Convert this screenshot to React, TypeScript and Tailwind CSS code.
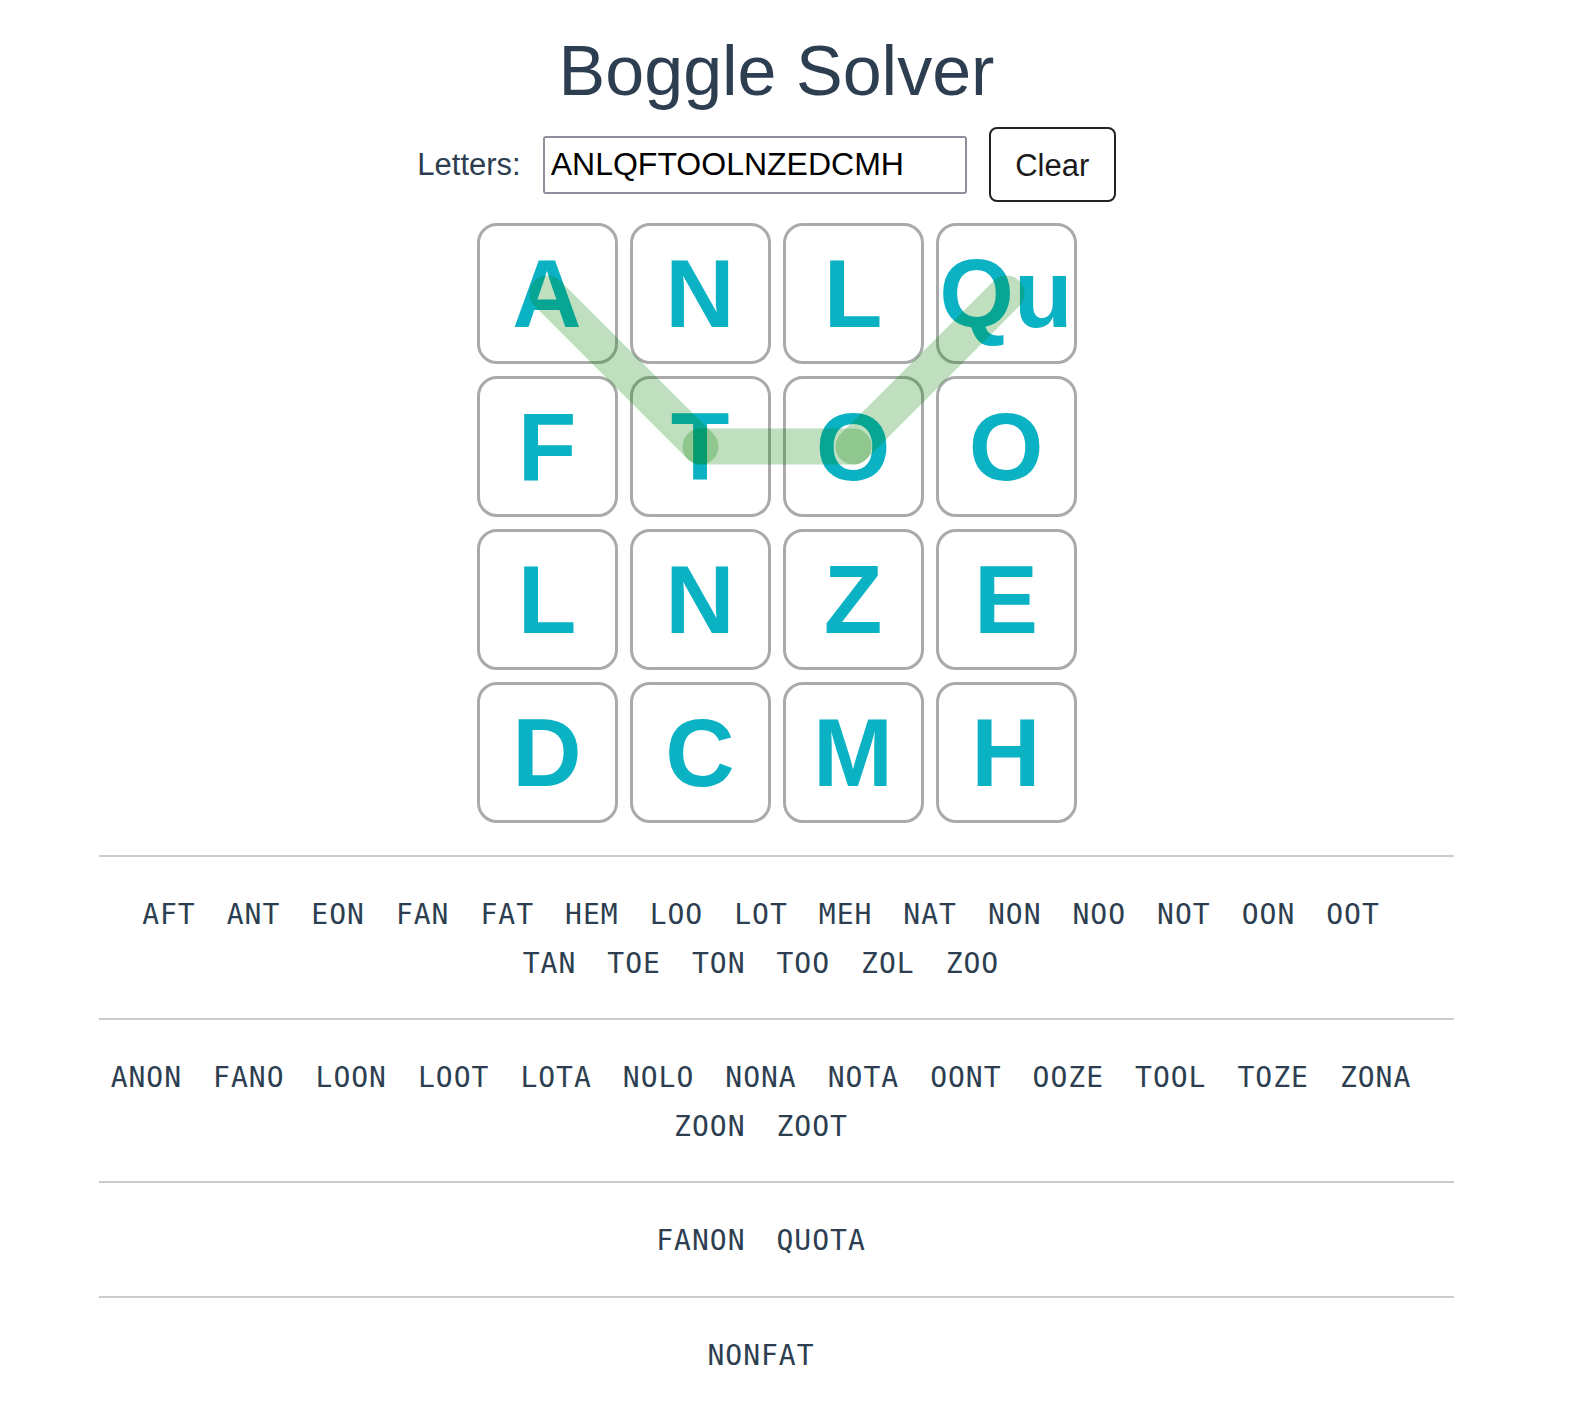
import React from "react";

const board: string[] = ["A","N","L","Qu","F","T","O","O","L","N","Z","E","D","C","M","H"];

const sections: string[][][] = [
  [
    ["AFT","ANT","EON","FAN","FAT","HEM","LOO","LOT","MEH","NAT","NON","NOO","NOT","OON","OOT"],
    ["TAN","TOE","TON","TOO","ZOL","ZOO"],
  ],
  [
    ["ANON","FANO","LOON","LOOT","LOTA","NOLO","NONA","NOTA","OONT","OOZE","TOOL","TOZE","ZONA"],
    ["ZOON","ZOOT"],
  ],
  [["FANON","QUOTA"]],
  [["NONFAT"]],
];

const PITCH = 153;
const HALF = 70.5;
const pathCells: [number, number][] = [
  [0, 3],
  [1, 2],
  [1, 1],
  [0, 0],
];

function center(rc: [number, number]) {
  return { x: rc[1] * PITCH + HALF, y: rc[0] * PITCH + HALF };
}

export default function App() {
  const segs = pathCells.slice(0, -1).map((c, i) => {
    const a = center(c);
    const b = center(pathCells[i + 1]);
    return { a, b };
  });

  return (
    <div
      className="min-h-[1410px] bg-white text-[#2c3e50]"
      style={{ fontFamily: '"Liberation Sans", Arial, Helvetica, sans-serif' }}
    >
      <div className="ml-[99px] w-[1355px] text-center">
        <h1 className="pt-[31px] text-[70px] leading-[80px] font-normal">Boggle Solver</h1>

        <div className="mt-[16px] flex h-[75px] items-center justify-center pr-[20px]">
          <label className="text-[31px] leading-[36px] text-[#2c3e50]">Letters:</label>
          <input
            className="ml-[22px] h-[58px] w-[424px] rounded-[3px] border-2 border-[#8f8f9d] bg-white pl-[6px] text-[32px] text-black outline-none"
            defaultValue="ANLQFTOOLNZEDCMH"
          />
          <button className="ml-[22px] h-[75px] w-[127px] rounded-[8px] border-2 border-[#222222] bg-white pt-[3px] text-[31px] text-[#1a1a1a]">
            Clear
          </button>
        </div>

        <div className="relative mx-auto mt-[21px] grid w-[600px] grid-cols-4 gap-[12px]">
          {board.map((l, i) => (
            <div
              key={i}
              className="flex h-[141px] w-[141px] items-center justify-center rounded-[20px] border-[3px] border-[#aaaaaa] text-[96px] font-bold leading-none text-[#0ab2c4]"
            >
              {l}
            </div>
          ))}
          <svg
            className="pointer-events-none absolute left-0 top-0"
            width={600}
            height={600}
            viewBox="0 0 600 600"
          >
            {segs.map((s, i) => (
              <line
                key={i}
                x1={s.a.x}
                y1={s.a.y}
                x2={s.b.x}
                y2={s.b.y}
                stroke="#008000"
                strokeOpacity={0.25}
                strokeWidth={36}
                strokeLinecap="round"
              />
            ))}
          </svg>
        </div>

        <div className="mt-[32px]">
          {sections.map((sec, si) => (
            <div key={si}>
              <div className="h-[2px] w-full bg-[#c9ccd0]" />
              <div
                className="pb-[30px] pt-[34px] text-[28px] leading-[48.5px] tracking-[1px] text-[#2c3e50]"
                style={{ fontFamily: '"DejaVu Sans Mono", monospace' }}
              >
                {sec.map((line, li) => (
                  <div key={li} className="flex justify-center">
                    {line.map((w) => (
                      <span key={w} className="mr-[31px]">
                        {w}
                      </span>
                    ))}
                  </div>
                ))}
              </div>
            </div>
          ))}
        </div>
      </div>
    </div>
  );
}
